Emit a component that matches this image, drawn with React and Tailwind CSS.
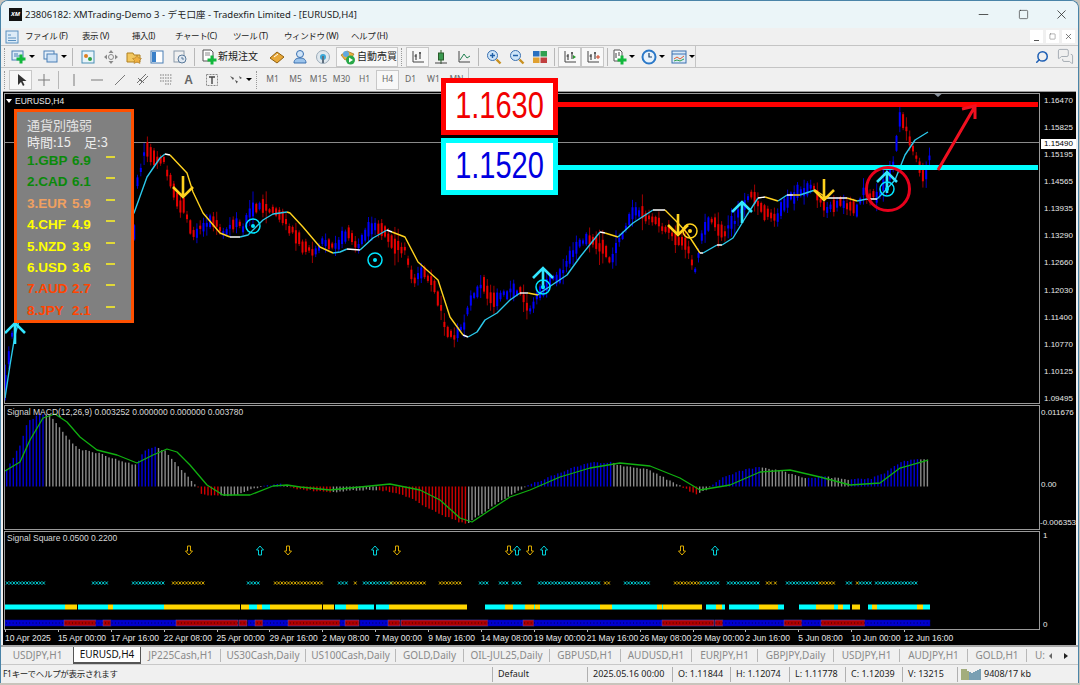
import { Minus, Square, X, Search, MessagesSquare } from "lucide-react";

const jp = "font-['Noto_Sans','Noto_Sans_CJK_JP',sans-serif]";

function interp(pts, x) {
  if (x <= pts[0][0]) return pts[0][1];
  for (let i = 1; i < pts.length; i++) {
    if (x <= pts[i][0]) {
      const t = (x - pts[i - 1][0]) / (pts[i][0] - pts[i - 1][0]);
      return pts[i - 1][1] + t * (pts[i][1] - pts[i - 1][1]);
    }
  }
  return pts[pts.length - 1][1];
}

// fixed random so the chart comes out the same every time
let seed = 41;
function rnd() {
  seed = (seed * 16807) % 2147483647;
  return seed / 2147483647;
}

const priceTrack = [[5,385],[10,340],[15,320],[20,290],[134,230],[137,183],[145,147],[153,160],[163,160],[170,183],[177,203],[183,207],[193,233],[203,227],[213,220],[223,233],[233,223],[243,227],[252,207],[263,208],[273,210],[283,220],[293,233],[302,245],[313,253],[323,242],[335,247],[347,233],[357,248],[370,227],[383,227],[393,245],[405,250],[413,283],[423,270],[435,287],[445,327],[453,340],[463,327],[470,303],[483,283],[493,302],[507,293],[520,290],[528,310],[540,293],[553,280],[563,270],[577,247],[587,237],[602,247],[610,260],[620,240],[633,213],[643,215],[663,227],[677,240],[687,247],[695,273],[703,230],[710,220],[723,233],[737,217],[750,193],[763,210],[777,217],[787,200],[803,190],[813,188],[825,210],[840,203],[857,210],[863,193],[877,197],[887,180],[893,165],[900,115],[908,135],[918,165],[925,178],[930,150]];

const candles = [];
for (let x = 5; x < 930; x += 3.3) {
  const mid = interp(priceTrack, x) + (rnd() - 0.5) * 5;
  const slope = interp(priceTrack, x + 4) - interp(priceTrack, x - 4);
  const up = slope + (rnd() - 0.5) * 10 < 0;
  const body = 3 + rnd() * 12;
  const wick = 1 + rnd() * rnd() * 14;
  candles.push({ x, y: mid - body / 2, h: body, top: mid - body / 2 - wick, bot: mid + body / 2 + wick, up });
}

const CY = "#2bc8ea";
const YL = "#ffd21e";
const WH = "#ffffff";
const maLine = [
  [CY, [[5,398],[10,365],[15,335],[22,310],[134,213],[147,177],[160,158],[165,154]]],
  [WH, [[165,154],[170,155]]],
  [YL, [[170,155],[187,173],[193,192],[203,213],[220,233],[230,237]]],
  [WH, [[230,237],[240,237]]],
  [CY, [[240,237],[248,235],[263,220],[273,214],[287,212]]],
  [YL, [[287,212],[290,213],[303,227],[320,247],[333,253]]],
  [CY, [[333,253],[340,252],[347,249]]],
  [WH, [[347,249],[360,250]]],
  [CY, [[360,250],[373,238],[387,230]]],
  [WH, [[387,230],[392,232]]],
  [YL, [[392,232],[405,237],[418,262],[438,280],[450,317],[463,335]]],
  [WH, [[463,335],[468,337]]],
  [CY, [[468,337],[477,332],[485,320],[497,313],[510,300],[520,293]]],
  [WH, [[520,293],[528,293]]],
  [YL, [[528,293],[538,295]]],
  [CY, [[538,295],[540,293],[567,275],[580,257],[600,232]]],
  [WH, [[600,232],[605,233]]],
  [YL, [[605,233],[618,237]]],
  [CY, [[618,237],[633,223],[653,210]]],
  [WH, [[653,210],[665,210]]],
  [YL, [[665,210],[677,222],[687,233],[700,253]]],
  [WH, [[700,253],[703,253]]],
  [CY, [[703,253],[717,245]]],
  [WH, [[717,245],[722,245]]],
  [CY, [[722,245],[733,238],[747,215],[758,198]]],
  [WH, [[758,198],[765,197]]],
  [YL, [[765,197],[778,201]]],
  [CY, [[778,201],[787,195]]],
  [WH, [[787,195],[793,195]]],
  [YL, [[793,195],[800,195]]],
  [CY, [[800,195],[815,190]]],
  [YL, [[815,190],[827,198]]],
  [WH, [[827,198],[847,198]]],
  [YL, [[847,198],[857,201]]],
  [CY, [[857,201],[867,199]]],
  [WH, [[867,199],[877,199]]],
  [CY, [[877,199],[883,193],[895,180],[905,155],[915,140],[928,132]]],
];

const histPts = [[5,15],[20,43],[27,65],[40,73],[50,71],[60,58],[70,45],[80,37],[100,33],[120,25],[135,22],[145,37],[155,40],[165,35],[175,23],[190,7],[197,0],[200,-8],[215,-9],[230,-9],[240,-7],[253,-2],[265,1],[280,3],[295,-3],[310,-4],[330,-6],[350,-4],[375,-3],[395,-6],[415,-14],[435,-26],[455,-34],[465,-38],[480,-28],[500,-14],[520,-3],[530,2],[550,10],[570,18],[590,24],[610,24],[625,20],[645,18],[665,8],[685,-2],[695,-8],[705,-4],[720,8],[740,16],[760,20],[785,14],[805,8],[825,10],[845,7],[870,8],[885,14],[900,24],[915,28],[928,26]];
const histBars = [];
for (let x = 6; x < 929; x += 3.3) {
  const v = interp(histPts, x);
  const prev = interp(histPts, x - 3.3);
  let color = "#8a8a8a";
  if (v > 0 && v >= prev) color = "#0000d8";
  if (v < 0 && v < prev) color = "#d00000";
  if (v < 0 && x > 395 && x < 465) color = "#d00000";
  histBars.push({ x, v: v + (rnd() - 0.5) * 1.5, color });
}
const signalLine = [[5,471],[20,462],[30,440],[43,418],[55,414],[67,422],[80,437],[97,450],[117,455],[137,463],[153,455],[167,449],[177,452],[190,465],[207,485],[223,495],[250,495],[273,486],[287,485],[300,487],[330,490],[360,487],[390,484],[420,490],[440,500],[460,518],[472,522],[490,510],[510,497],[530,490],[560,477],[590,468],[620,463],[650,466],[680,478],[700,490],[730,485],[760,472],[790,470],[820,477],[850,485],[880,483],[900,468],[928,460]];

const C = "#00ffff";
const Y = "#ffd500";
const xRuns = [[C,6,43],[C,92,106],[C,132,162],[Y,172,202],[C,247,257],[Y,274,321],[C,338,342],[C,345,348],[Y,354,357],[C,363,390],[Y,390,426],[Y,439,459],[C,479,486],[C,499,506],[C,512,519],[C,538,598],[Y,604,608],[C,624,650],[Y,674,700],[C,700,717],[C,727,757],[Y,766,770],[Y,774,777],[C,786,816],[Y,819,833],[C,846,852],[Y,856,859],[C,859,872],[C,875,915]];
const barRuns = [[C,5,65],[Y,65,77],[C,78,108],[Y,108,113],[C,113,164],[Y,164,240],[Y,241,249],[C,249,257],[Y,257,262],[C,262,270],[Y,270,322],[Y,323,334],[C,335,346],[Y,346,358],[C,358,374],[C,376,389],[Y,389,467],[C,485,493],[C,493,505],[Y,505,513],[C,513,525],[Y,525,534],[C,534,535],[Y,535,540],[C,540,600],[Y,600,612],[C,612,657],[Y,657,662],[C,662,663],[Y,663,702],[C,706,716],[Y,716,722],[C,722,725],[C,729,759],[Y,759,778],[C,778,784],[C,799,816],[Y,816,834],[C,834,838],[Y,838,843],[C,843,850],[Y,852,860],[C,868,872],[Y,872,877],[C,877,917],[Y,917,923],[C,923,930]];
const B = "#0000d0";
const R = "#b00000";
const trendRuns = [[B,5,64],[R,64,96],[B,96,103],[R,103,111],[B,111,176],[R,176,238],[R,239,247],[B,248,255],[R,255,263],[B,263,288],[R,288,340],[B,340,345],[R,345,359],[B,360,388],[R,388,400],[R,401,488],[B,488,523],[R,523,534],[B,534,662],[R,662,714],[R,715,723],[B,723,784],[R,784,802],[B,802,821],[R,821,865],[B,865,930]];

const arrowsSquare = [[Y,189],[C,260],[Y,288],[C,375],[Y,397],[Y,509],[C,517],[Y,530],[C,544],[Y,682],[C,715]];

const pts = (a) => a.map((p) => p.join(",")).join(" ");

function xMarks(a, b) {
  let d = "";
  for (let x = a; x < b; x += 3.3) d += `M${x} 581.5l2.6 3M${x + 2.6} 581.5l-2.6 3`;
  return d;
}

function BigArrow({ x, y, color, down }) {
  // y is the tip of the arrow
  const s = down ? -1 : 1;
  return (
    <path
      d={`M${x} ${y + s * 21}V${y}M${x - 10} ${y + s * 10}L${x} ${y}L${x + 10} ${y + s * 10}`}
      fill="none"
      stroke={color}
      strokeWidth="2.6"
    />
  );
}

function Ring({ x, y, color }) {
  return (
    <g>
      <circle cx={x} cy={y} r="7" fill="none" stroke={color} strokeWidth="1.5" />
      <circle cx={x} cy={y} r="2" fill={color} />
    </g>
  );
}

function MainChart() {
  return (
    <svg width="1034" height="309" viewBox="5 94 1034 309" className="block">
      <line x1="4" x2="1039" y1="142.5" y2="142.5" stroke="#8a8a8a" />
      {candles.map((c, i) => (
        <g key={i} fill={c.up ? "#0000ff" : "#e80000"}>
          <rect x={c.x} y={c.top} width="1" height={c.bot - c.top} fill={c.up ? "#0000c8" : "#a00000"} />
          <rect x={c.x - 0.5} y={c.y} width="2" height={c.h} />
        </g>
      ))}
      {maLine.map(([color, p], i) => (
        <polyline key={i} points={pts(p)} fill="none" stroke={color} strokeWidth="1.4" strokeLinejoin="round" />
      ))}
      <BigArrow x={15} y={323} color="#33e6ff" />
      <BigArrow x={183} y={197} color="#ffd21e" down />
      <BigArrow x={678} y={235} color="#ffd21e" down />
      <BigArrow x={824} y={200} color="#ffd21e" down />
      <BigArrow x={543} y={268} color="#33e6ff" />
      <BigArrow x={742} y={202} color="#33e6ff" />
      <BigArrow x={887} y={172} color="#33e6ff" />
      <Ring x={253} y={226} color="#00e5ff" />
      <Ring x={375} y={260} color="#00e5ff" />
      <Ring x={543} y={287} color="#00e5ff" />
      <Ring x={690} y={231} color="#ffd21e" />
      <Ring x={887} y={189} color="#00e5ff" />
      <path d="M932 92h12l-6 5z" fill="#8a94a0" />
      <line x1="558" x2="1038" y1="104.5" y2="104.5" stroke="#ff0000" strokeWidth="5" />
      <line x1="558" x2="1038" y1="167.5" y2="167.5" stroke="#00ffff" strokeWidth="5" />
      <circle cx="888" cy="189" r="21.5" fill="none" stroke="#e8001c" strokeWidth="3" />
      <path d="M938 170L974 108M962 109L975 106L975 119" fill="none" stroke="#f01020" strokeWidth="3" />
    </svg>
  );
}

function MacdChart() {
  return (
    <svg width="1034" height="123" viewBox="5 406 1034 123" className="block">
      {histBars.map((b, i) => (
        <rect key={i} x={b.x} y={b.v > 0 ? 486.5 - b.v : 486.5} width="1.4" height={Math.max(Math.abs(b.v), 0.8)} fill={b.color} />
      ))}
      <polyline points={pts(signalLine)} fill="none" stroke="#10b010" strokeWidth="1.3" strokeLinejoin="round" />
    </svg>
  );
}

function SquareChart() {
  const trendDots = [];
  for (let x = 6; x < 930; x += 3.3) trendDots.push(x);
  return (
    <svg width="1034" height="97" viewBox="5 532 1034 97" className="block">
      {arrowsSquare.map(([color, x], i) => (
        <path
          key={i}
          d={color === C
            ? `M${x} 546l3.5 4h-2v5h-3v-5h-2z`
            : `M${x - 1.5} 546h3v5h2l-3.5 4l-3.5 -4h2z`}
          fill="none"
          stroke={color === C ? "#00d0d8" : "#d8a800"}
          strokeWidth="1"
        />
      ))}
      {xRuns.map(([color, a, b], i) => (
        <path key={i} d={xMarks(a, b)} stroke={color === C ? "#00e0e8" : "#e8b800"} strokeWidth="0.9" fill="none" />
      ))}
      {barRuns.map(([color, a, b], i) => (
        <rect key={i} x={a} y="604.5" width={b - a} height="5" fill={color} />
      ))}
      {trendRuns.map(([color, a, b], i) => (
        <rect key={i} x={a} y="620" width={b - a} height="6" fill={color} stroke={color === R ? "#5050e0" : "#0000a0"} strokeWidth="0.5" />
      ))}
      {trendDots.map((x) => (
        <rect key={x} x={x} y="622.5" width="1" height="1" fill="#000" opacity="0.7" />
      ))}
    </svg>
  );
}

/* ---- small toolbar drawings ---- */
function Tool({ children, active }) {
  return (
    <div className={`flex items-center justify-center h-[20px] w-[23px] shrink-0 ${active ? "bg-[#f8f8f8] border border-[#c8c8c8]" : ""}`}>
      {children}
    </div>
  );
}
const Caret = () => <span className="ml-[2px] w-0 h-0 border-x-[3px] border-x-transparent border-t-[3px] border-t-black" />;
const Sep = () => <span className="w-px h-[18px] bg-[#b8b8b8] mx-[3px] shrink-0" />;
const Grip = () => <span className="w-[3px] h-[18px] border-l border-dotted border-[#9a9a9a] ml-[3px] mr-[2px] shrink-0" />;

const Plus = ({ x = 9, y = 9 }) => <path d={`M${x - 4.5} ${y}h9M${x} ${y - 4.5}v9`} stroke="#12b83c" strokeWidth="3" />;
const I = ({ children, s = 16 }) => <svg width={s} height={s} viewBox="0 0 16 16" className="block shrink-0">{children}</svg>;

const ChartNew = () => <I><rect x="1" y="2" width="11" height="9" fill="#dcebf7" stroke="#4a7fb5" /><path d="M3 7h6M3 5h4" stroke="#4a7fb5" /><Plus x={10} y={10} /></I>;
const Profiles = () => <I><rect x="1" y="2" width="10" height="8" fill="#e6f0fa" stroke="#4a7fb5" /><rect x="4" y="5" width="10" height="8" fill="#cfe2f5" stroke="#4a7fb5" /></I>;
const MarketWatch = () => <I><rect x="2" y="2" width="12" height="12" fill="#e8f4fa" stroke="#4a8fb5" /><circle cx="6" cy="7" r="2" fill="#e08020" /><circle cx="10" cy="10" r="2" fill="#30a040" /></I>;
const DataWin = () => <I><path d="M8 1l2.5 3h-5zM8 15l-2.5-3h5zM1 8l3-2.5v5zM15 8l-3 2.5v-5z" fill="#8a8a8a" /><circle cx="8" cy="8" r="2.5" fill="none" stroke="#8a8a8a" /></I>;
const Navigator = () => <I><path d="M1 4h6l1 2h6v7H1z" fill="#f3c860" stroke="#b08020" /><path d="M11 6l1.5 3 3 .5-2 2 .5 3-3-1.5-3 1.5.5-3-2-2 3-.5z" fill="#f0b040" stroke="#a07020" strokeWidth=".5" /></I>;
const Terminal = () => <I><rect x="2" y="2" width="12" height="12" fill="#fff" stroke="#4a7fb5" /><rect x="3" y="3" width="4" height="10" fill="#3a80c8" /></I>;
const Tester = () => <I><rect x="2" y="2" width="10" height="11" fill="#f0f0f0" stroke="#8a9aaa" /><circle cx="10" cy="10" r="4" fill="#dfe8f2" stroke="#5a7a9a" /><path d="M10 8v2h2" stroke="#5a7a9a" fill="none" /></I>;
const NewOrder = () => <I><path d="M2 1h8l2 2v9H2z" fill="#fff" stroke="#555" /><path d="M4 4h5M4 6h5" stroke="#888" /><Plus x={11} y={11} /></I>;
const Books = () => <I><path d="M1 9l7-6 7 5-7 6z" fill="#e8a838" stroke="#906010" /><path d="M5 8l4-3" stroke="#fff" /></I>;
const Person = () => <I><circle cx="8" cy="5" r="3.5" fill="#cfe4f8" stroke="#3a70b0" /><path d="M2 14c0-4 3-5 6-5s6 1 6 5z" fill="#9cc4ec" stroke="#3a70b0" /></I>;
const Signal = () => <I><circle cx="8" cy="8" r="6.5" fill="#e0e8ee" stroke="#9aaab8" /><circle cx="8" cy="8" r="3" fill="#3aa8d8" /><rect x="7" y="7" width="2" height="7" fill="#607080" /></I>;
const AutoTrade = () => <I><path d="M1 6l6-4 7 3-2 3-7 3z" fill="#e8b040" stroke="#906010" strokeWidth=".6" /><circle cx="6" cy="5" r="3" fill="#60a8e0" /><circle cx="10.5" cy="11" r="4.5" fill="#28a848" /><path d="M9 8.5l4 2.5-4 2.5z" fill="#fff" /></I>;
const AxisGlyph = ({ mark }) => <I><path d="M3 2v11h11" fill="none" stroke="#444" /><path d="M6 5v6M10 3v7" stroke="#2a2a2a" /><path d="M4.5 7h2M9 4h2" stroke="#2a2a2a" />{mark}</I>;
const Candle = () => <I><path d="M8 1v14" stroke="#2a5a2a" /><rect x="5.5" y="4" width="5" height="7" fill="#3a9a50" stroke="#2a5a2a" /><path d="M2 14h12" stroke="#444" /></I>;
const LineGlyph = () => <I><path d="M3 2v11h11" fill="none" stroke="#444" /><path d="M4 11l4-6 3 4 3-2" fill="none" stroke="#208050" /></I>;
const ZoomGlyph = ({ plus }) => <I><circle cx="6.5" cy="6.5" r="5" fill="#cde4f8" stroke="#3a70b0" /><path d="M10.5 10.5l4 4" stroke="#c89020" strokeWidth="2.4" /><path d={plus ? "M4 6.5h5M6.5 4v5" : "M4 6.5h5"} stroke="#2060a8" strokeWidth="1.4" /></I>;
const Tile = () => <I><rect x="1" y="2" width="6.5" height="5.5" fill="#2a70c0" /><rect x="8.5" y="2" width="6.5" height="5.5" fill="#30a050" /><rect x="1" y="8.5" width="6.5" height="5.5" fill="#e0a030" /><rect x="8.5" y="8.5" width="6.5" height="5.5" fill="#c04040" /></I>;
const Clock = () => <I><circle cx="8" cy="8" r="6.5" fill="#e8f2fb" stroke="#2a78c8" strokeWidth="2" /><path d="M8 4v4h3" stroke="#18406a" fill="none" strokeWidth="1.2" /></I>;
const Template = () => <I><rect x="1" y="2" width="14" height="12" fill="#dbeaf8" stroke="#3a70b0" /><path d="M1 5h14" stroke="#3a70b0" /><path d="M3 10l3-2 3 2 4-3" fill="none" stroke="#e06030" /><path d="M3 12l3-1 3 1 4-2" fill="none" stroke="#30a050" /></I>;
const Indicator = () => <I><path d="M3 1h6l2 2v9H3z" fill="#fff" stroke="#555" /><path d="M5 4v5M8 3v4" stroke="#444" /><Plus x={11} y={11} /></I>;

const Tf = ({ t, active }) => (
  <div className={`w-[23px] h-[20px] flex items-center justify-center text-[8.5px] text-[#666] ${active ? "bg-[#f8f8f8] border border-[#c8c8c8]" : ""}`}>{t}</div>
);

function Toolbar1() {
  return (
    <div className="h-[23px] flex items-center border-b border-t border-[#c4c4c4] bg-[#f0f0f0]">
      <div className="flex items-center h-full w-[695px] border-r border-[#c4c4c4]">
        <Grip />
        <div className="flex items-center w-[31px] pl-[2px]"><ChartNew /><Caret /></div>
        <div className="flex items-center w-[30px] pl-[4px]"><Profiles /><Caret /></div>
        <Sep />
        <Tool><MarketWatch /></Tool>
        <Tool><DataWin /></Tool>
        <Tool><Navigator /></Tool>
        <Tool><Terminal /></Tool>
        <Tool><Tester /></Tool>
        <Sep />
        <div className={`flex items-center pl-[3px] w-[67px] shrink-0 gap-[1px] text-[10px] text-[#222] ${jp}`}><NewOrder /><span className="whitespace-nowrap">新規注文</span></div>
        <Tool><Books /></Tool>
        <Tool><Person /></Tool>
        <Tool><Signal /></Tool>
        <div className={`flex items-center h-[20px] w-[62px] shrink-0 pl-[3px] gap-[1px] text-[10px] text-[#222] bg-[#f8f8f8] border border-[#c8c8c8] ml-[2px] ${jp}`}><AutoTrade /><span className="whitespace-nowrap">自動売買</span></div>
        <Grip />
        <Tool active><AxisGlyph /></Tool>
        <Tool><Candle /></Tool>
        <Tool><LineGlyph /></Tool>
        <Sep />
        <Tool><ZoomGlyph plus /></Tool>
        <Tool><ZoomGlyph /></Tool>
        <Tool><Tile /></Tool>
        <Sep />
        <Tool active><AxisGlyph mark={<path d="M11 6l3 2-3 2z" fill="#2a9a30" />} /></Tool>
        <Tool active><AxisGlyph mark={<path d="M11 8h4M13 6v4" stroke="#d04020" />} /></Tool>
        <Sep />
        <div className="flex items-center w-[30px] shrink-0"><Indicator /><Caret /></div>
        <div className="flex items-center w-[30px] shrink-0"><Clock /><Caret /></div>
        <div className="flex items-center shrink-0"><Template /><Caret /></div>
      </div>
      <div className="flex-1 flex items-center justify-end gap-[8px] pr-[4px]">
        <Search size={14} strokeWidth={2.6} className="text-[#1e5fb4] -scale-x-100" />
        <MessagesSquare size={17} strokeWidth={1.2} className="text-[#9aa2aa]" />
      </div>
    </div>
  );
}

function Toolbar2() {
  return (
    <div className="h-[23px] flex items-center bg-[#f0f0f0]">
      <div className="flex items-center h-full w-[468px] border-r border-[#c4c4c4]">
        <Grip />
        <Tool active><I><path d="M5 2v11l3-3 2 4 1.5-1-2-4h4z" fill="#333" /></I></Tool>
        <Tool><I><path d="M8 2v12M2 8h12" stroke="#7a7a7a" /></I></Tool>
        <Sep />
        <Tool><I><path d="M8 2v12" stroke="#7a7a7a" /></I></Tool>
        <Tool><I><path d="M2 8h12" stroke="#7a7a7a" /></I></Tool>
        <Tool><I><path d="M3 13L13 3" stroke="#7a7a7a" /></I></Tool>
        <Tool><I><path d="M2 11L11 2M4 13L13 4M6 8l3 3" stroke="#707070" fill="none" /><path d="M3 6l4 4" stroke="#707070" /></I></Tool>
        <Tool><I><path d="M2 3h12M2 6h12M2 9h12M7 12h6" stroke="#7a7a7a" strokeDasharray="1.5 1" /></I></Tool>
        <Tool><span className="text-[12px] font-bold font-['Liberation_Sans'] text-[#666]">A</span></Tool>
        <Tool><I><rect x="2.5" y="2.5" width="11" height="11" fill="none" stroke="#8a8a8a" strokeDasharray="2 1" /><path d="M5 5h6M8 5v7" stroke="#444" strokeWidth="1.4" /></I></Tool>
        <div className="flex items-center w-[30px] pl-[5px]"><I><path d="M2 4l4 2-1 2zM7 8l3 1.5-1.5 2zM11 4l3 2-2 1z" fill="#555" /></I><Caret /></div>
        <Grip />
        <div className={`flex items-center ${jp}`}>
          <Tf t="M1" /><Tf t="M5" /><Tf t="M15" /><Tf t="M30" /><Tf t="H1" /><Tf t="H4" active /><Tf t="D1" /><Tf t="W1" /><Tf t="MN" />
        </div>
      </div>
    </div>
  );
}

const priceTicks = ["1.16470","1.15825","1.15195","1.14565","1.13935","1.13290","1.12660","1.12030","1.11400","1.10770","1.10125","1.09495"];
const dateTicks = ["10 Apr 2025","15 Apr 00:00","17 Apr 16:00","22 Apr 08:00","25 Apr 00:00","29 Apr 16:00","2 May 08:00","7 May 00:00","9 May 16:00","14 May 08:00","19 May 00:00","21 May 16:00","26 May 08:00","29 May 00:00","2 Jun 16:00","5 Jun 08:00","10 Jun 00:00","12 Jun 16:00"];
const tabs = [["USDJPY,H1",71],["EURUSD,H4",68],["JP225Cash,H1",80],["US30Cash,Daily",85],["US100Cash,Daily",90],["GOLD,Daily",68],["OIL-JUL25,Daily",86],["GBPUSD,H1",71],["AUDUSD,H1",71],["EURJPY,H1",66],["GBPJPY,Daily",76],["USDJPY,H1",66],["AUDJPY,H1",68],["GOLD,H1",59]];
const strength = [
  ["1.GBP","6.9","text-[#0a8a0a]"],
  ["2.CAD","6.1","text-[#0a8a0a]"],
  ["3.EUR","5.9","text-[#f0a060]"],
  ["4.CHF","4.9","text-[#ffff00]"],
  ["5.NZD","3.9","text-[#ffff00]"],
  ["6.USD","3.6","text-[#ffff00]"],
  ["7.AUD","2.7","text-[#ff4500]"],
  ["8.JPY","2.1","text-[#ff4500]"],
];
const statusCells = [["Default",95],["2025.05.16 00:00",85],["O: 1.11844",58],["H: 1.12074",59],["L: 1.11778",56],["C: 1.12039",57],["V: 13215",55]];

export default function App() {
  return (
    <div className={`relative w-[1080px] h-[685px] overflow-hidden bg-[#c8c4bc] text-[#222] ${jp}`}>
      <div className="w-[1079px] h-[683px] flex flex-col rounded-t-[8px] overflow-hidden border border-[#4a84a8] border-b-0 bg-[#f0f0f0]">
        {/* title bar */}
        <div className="h-[27px] shrink-0 flex items-center bg-[#ebf5f8] pl-[8px]">
          <div className="w-[13px] h-[13px] bg-[#111] flex items-center justify-center text-[6px] font-bold italic text-white">XM</div>
          <span className="ml-[3px] text-[9.5px] leading-none text-[#222]">23806182: XMTrading-Demo 3 - デモ口座 - Tradexfin Limited - [EURUSD,H4]</span>
          <div className="ml-auto flex items-center text-[#222]">
            <div className="w-[38px] flex justify-center"><Minus size={15} strokeWidth={1.2} /></div>
            <div className="w-[42px] flex justify-center"><Square size={11} strokeWidth={1.3} /></div>
            <div className="w-[34px] flex justify-center"><X size={15} strokeWidth={1.2} /></div>
          </div>
        </div>
        {/* menu */}
        <div className="h-[17px] shrink-0 flex items-center pl-[4px] bg-[#f0f0f0] text-[8.5px] tracking-[-0.4px] text-[#222]">
          <svg width="14" height="14" viewBox="0 0 14 14" className="mr-[6px]"><rect x="1" y="1" width="12" height="12" fill="#dcebf7" stroke="#5a90c0" /><path d="M3 5h3M3 8h8M3 10.5h8" stroke="#5a90c0" /></svg>
          <span className="w-[57px] whitespace-nowrap">ファイル (F)</span>
          <span className="w-[50px] whitespace-nowrap">表示 (V)</span>
          <span className="w-[43px] whitespace-nowrap">挿入(I)</span>
          <span className="w-[58px] whitespace-nowrap">チャート(C)</span>
          <span className="w-[51px] whitespace-nowrap">ツール (T)</span>
          <span className="w-[67px] whitespace-nowrap">ウィンドウ (W)</span>
          <span className="whitespace-nowrap">ヘルプ (H)</span>
          <div className="ml-auto flex items-center gap-[3px] pr-[3px]">
            <div className="w-[13px] h-[13px] bg-white flex items-end justify-center"><span className="w-[5px] h-px bg-[#555] mb-[2px]" /></div>
            <div className="w-[13px] h-[13px] bg-white flex items-center justify-center"><Square size={7} strokeWidth={1.5} className="text-[#555]" /></div>
            <div className="w-[13px] h-[13px] bg-white flex items-center justify-center"><X size={9} strokeWidth={2} className="text-[#555]" /></div>
          </div>
        </div>
        <Toolbar1 />
        <Toolbar2 />
        {/* chart window */}
        <div className="shrink-0 mx-[2px] h-[554px] bg-black border-t border-[#9a9a9a] flex flex-col font-['Liberation_Sans',sans-serif] text-[#e8e8e8] text-[8.5px] leading-none">
          <div className="flex h-[312px] pt-px">
            <div className="relative w-[1036px] ml-px border border-[#9a9a9a]">
              <MainChart />
              <span className="absolute left-[1px] top-[3px] flex items-center gap-[3px]"><span className="w-0 h-0 border-x-[3px] border-x-transparent border-t-[4px] border-t-white" />EURUSD,H4</span>
              {/* currency strength box */}
              <div className="absolute left-[9px] top-[15px] w-[120px] h-[214px] bg-[#808080] border-[3px] border-[#ff5000] pl-[10px] pt-[4px] font-['Liberation_Sans',sans-serif]">
                <div className="text-[13px] leading-[17px] text-[#e4e4e4] font-['Noto_Sans_CJK_JP']">通貨別強弱</div>
                <div className="text-[13px] leading-[17px] text-[#ececec] font-['Noto_Sans_CJK_JP'] whitespace-nowrap">時間:15　足:3</div>
                <div className="flex flex-col">
                  {strength.map(([name, val, color]) => (
                    <div key={name} className="relative h-[21.4px] flex items-center">
                      <span className={`text-[13.5px] font-bold leading-none whitespace-nowrap flex ${color}`}>
                        <span className="w-[45px]">{name}</span>{val}
                      </span>
                      <span className="absolute left-[79px] top-[6px] w-[9px] h-[2px] bg-[#e0d838]" />
                    </div>
                  ))}
                </div>
              </div>
            </div>
            <div className="relative flex-1 flex flex-col justify-between pt-[4px] pb-[1px] pl-[4px] text-[8px]">
              {priceTicks.map((t) => <span key={t}>{t}</span>)}
              <span className="absolute left-[1px] top-[46px] w-[35px] h-[10px] bg-white text-black flex items-center justify-center">1.15490</span>
            </div>
          </div>
          <div className="flex h-[126px] pt-px">
            <div className="relative w-[1036px] ml-px border border-[#9a9a9a]">
              <MacdChart />
              <span className="absolute left-[2px] top-[2px] text-[#d8d8d8]">Signal MACD(12,26,9) 0.003252 0.000000 0.000000 0.003780</span>
            </div>
            <div className="relative flex-1 text-[8px]">
              <span className="absolute top-[4px] left-[1px]">0.011676</span>
              <span className="absolute top-[76px] left-[1px]">0.00</span>
              <span className="absolute top-[114px] left-0">-0.006353</span>
            </div>
          </div>
          <div className="flex h-[100px] pt-px">
            <div className="relative w-[1036px] ml-px border border-[#9a9a9a]">
              <SquareChart />
              <span className="absolute left-[2px] top-[2px] text-[#d8d8d8]">Signal Square 0.0500 0.2200</span>
            </div>
            <div className="flex-1 flex flex-col justify-between pl-[3px] pt-[1px] pb-[1px] text-[8px]">
              <span>1</span>
              <span>0</span>
            </div>
          </div>
          <div className="flex ml-[1px] pl-[1px] h-[14px]">
            {dateTicks.map((d) => (
              <div key={d} className="w-[52.9px] shrink-0 whitespace-nowrap relative pt-[4px]">
                <span className="absolute left-0 top-0 w-px h-[2px] bg-[#bbb]" />
                {d}
              </div>
            ))}
          </div>
        </div>
        {/* tabs */}
        <div className="h-[19px] shrink-0 flex items-center border-t-2 border-[#a8a8a8] text-[10px] text-[#8a8a8a] pl-[1px]">
          {tabs.map(([t, w], i) => (
            <div
              key={i}
              style={{ width: w }}
              className={`shrink-0 flex items-center justify-center whitespace-nowrap ${i === 1 ? "h-full bg-white text-[#111] border-x border-b-2 border-[#555]" : i === 0 ? "h-full" : "border-r border-[#b8b8b8] h-[13px]"}`}
            >
              {t}
            </div>
          ))}
          <span className="ml-[8px]">U:</span>
          <span className="ml-[4px] w-0 h-0 border-y-[3px] border-y-transparent border-r-[3px] border-r-[#666]" />
          <span className="ml-[12px] w-0 h-0 border-y-[3px] border-y-transparent border-l-[4px] border-l-[#222]" />
        </div>
        {/* status bar */}
        <div className="h-[19px] shrink-0 flex items-center text-[9px] text-[#222] border-t border-[#c8c8c8] pl-[2px]">
          <span className="w-[489px] text-[8.5px] tracking-[-0.3px]">F1キーでヘルプが表示されます</span>
          {statusCells.map(([t, w]) => (
            <span key={t} style={{ width: w }} className="h-[15px] flex items-center pl-[5px] border-l border-[#b0b0b0] whitespace-nowrap">{t}</span>
          ))}
          <div className="h-[15px] flex items-center pl-[3px] gap-[3px] border-l border-[#b0b0b0]">
            <svg width="20" height="11" viewBox="0 0 20 11"><path d="M1 0v11M3 0v11M5 0v11M7 2v9" stroke="#708030" strokeWidth="1.2" /><path d="M9 3v8M11 4v7M13 3v8M15 2v9M17 1v10M19 0v11" stroke="#2a6a8a" strokeWidth="1.2" /></svg>
            <span className="whitespace-nowrap">9408/17 kb</span>
          </div>
        </div>
      </div>
      {/* price call-out boxes drawn on top of the screenshot */}
      <div className="absolute left-[441px] top-[78px] w-[117px] h-[57px] bg-white border-[5px] border-[#ff0000] flex items-center justify-center">
        <span className="text-[#f00000] text-[29px] leading-none font-['Liberation_Sans'] scale-y-[1.25]">1.1630</span>
      </div>
      <div className="absolute left-[441px] top-[138px] w-[117px] h-[57px] bg-white border-[5px] border-[#00ffff] flex items-center justify-center">
        <span className="text-[#0000e0] text-[29px] leading-none font-['Liberation_Sans'] scale-y-[1.25]">1.1520</span>
      </div>
    </div>
  );
}
